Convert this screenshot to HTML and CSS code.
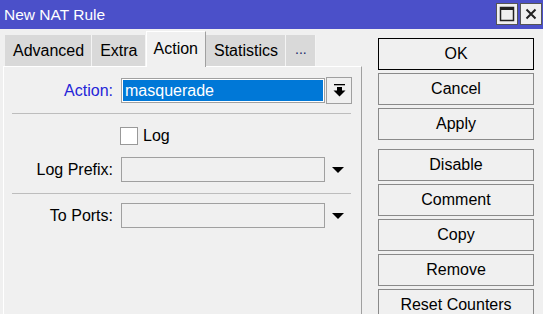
FILE: index.html
```html
<!DOCTYPE html>
<html>
	<head>
		<title>New NAT Rule</title>
		<link rel="stylesheet" href="styles.css">
	</head>
	<body>
		<div class="window">
			<div class="titlebar">
				<span class="title">New NAT Rule</span>
				<div class="win-btns">
					<button class="win-btn">
						<svg width="16" height="16" viewBox="0 0 16 16"><rect x="1.5" y="1.5" width="13" height="13" fill="none" stroke="#222" stroke-width="1.5"/><rect x="1" y="1" width="14" height="3" fill="#222"/></svg>
					</button>
					<button class="win-btn">
						<svg width="16" height="16" viewBox="0 0 16 16"><path d="M3.5 3.5 L12.5 12.5 M12.5 3.5 L3.5 12.5" stroke="#222" stroke-width="2"/></svg>
					</button>
				</div>
			</div>

			<div class="main">
				<div class="left">
					<div class="tabs">
						<div class="tab">Advanced</div>
						<div class="tab">Extra</div>
						<div class="tab active">Action</div>
						<div class="tab">Statistics</div>
						<div class="tab more">...</div>
					</div>
					<div class="panel">
						<div class="row">
							<label class="lbl blue">Action:</label>
							<div class="field selected">masquerade</div>
							<button class="drop-btn">
								<svg width="13" height="13" viewBox="0 0 13 13"><rect x="1" y="0" width="11" height="1.3" fill="#000"/><rect x="4" y="3" width="5" height="4" fill="#000"/><path d="M0.5 6.5 L12.5 6.5 L6.5 12.5 Z" fill="#000"/></svg>
							</button>
						</div>
						<div class="sep first"></div>
						<div class="check-row">
							<span class="checkbox"></span>
							<span>Log</span>
						</div>
						<div class="row prefix">
							<label class="lbl">Log Prefix:</label>
							<div class="field"></div>
							<span class="arrow"></span>
						</div>
						<div class="sep"></div>
						<div class="row ports">
							<label class="lbl">To Ports:</label>
							<div class="field"></div>
							<span class="arrow"></span>
						</div>
					</div>
				</div>

				<div class="actions">
					<button class="btn default">OK</button>
					<button class="btn">Cancel</button>
					<button class="btn">Apply</button>
					<button class="btn group">Disable</button>
					<button class="btn">Comment</button>
					<button class="btn">Copy</button>
					<button class="btn">Remove</button>
					<button class="btn">Reset Counters</button>
				</div>
			</div>
		</div>
	</body>
</html>
```

FILE: styles.css
```css
*{
	box-sizing: border-box;
}
html, body{
	margin: 0;
	height: 314px;
	overflow: hidden;
}
body{
	background: #f0f0f0;
	font-family: "Liberation Sans", Arial, sans-serif;
	font-size: 16px;
	color: #000;
}
.window{
	width: 543px;
}
.titlebar{
	height: 29px;
	background: #4b50c9;
	display: flex;
	align-items: center;
	justify-content: space-between;
	padding: 1px 1px 0 4px;
}
.title{
	color: #fff;
	font-size: 15.5px;
}
.win-btns{
	display: flex;
	gap: 2px;
	margin-top: -2px;
}
.win-btn{
	width: 22px;
	height: 22px;
	padding: 0;
	background: #f0f0f0;
	border: 1px solid #555;
	display: flex;
	align-items: center;
	justify-content: center;
}

.main{
	display: flex;
	padding-left: 3px;
}
.left{
	width: 359px;
	padding-top: 2px;
}
.tabs{
	display: flex;
	align-items: flex-end;
	height: 35px;
	margin-left: 2px;
	position: relative;
	z-index: 2;
}
.tab{
	height: 31px;
	line-height: 31px;
	padding: 0 7px 0 8px;
	background: #d9d9d9;
	border-right: 1px solid #f4f4f4;
}
.tab.active{
	height: 36px;
	line-height: 34px;
	margin-bottom: -1px;
	padding: 0 7px;
	background: #f0f0f0;
	border-top: 1px solid #fff;
	border-left: 1px solid #fff;
	border-right: 1px solid #a0a0a0;
}
.tab.more{
	padding: 0 8px 0 9px;
	line-height: 29px;
	font-size: 14px;
	color: #1a2a6a;
}
.panel{
	height: 260px;
	border-top: 1px solid #fff;
	border-left: 1px solid #fff;
	border-right: 1px solid #a0a0a0;
	padding-top: 10px;
}

.row{
	display: flex;
	align-items: center;
	height: 27px;
}
.lbl{
	width: 109px;
	text-align: right;
	margin-right: 8px;
}
.blue{
	color: #2525d8;
}
.field{
	width: 204px;
	height: 25px;
	border: 1px solid #a0a0a0;
	background: #f0f0f0;
}
.field.selected{
	background: #0078d7;
	color: #fff;
	box-shadow: inset 0 0 0 1px #fff;
	padding: 2px 3px;
	line-height: 19px;
}
.drop-btn{
	width: 26px;
	height: 27px;
	margin-left: 1px;
	padding: 0;
	border: 1px solid #a0a0a0;
	background: #f0f0f0;
	display: flex;
	align-items: center;
	justify-content: center;
}
.arrow{
	width: 0;
	height: 0;
	margin-left: 7px;
	border-left: 6.5px solid transparent;
	border-right: 6.5px solid transparent;
	border-top: 6px solid #000;
}
.sep{
	height: 1px;
	background: #bdbdbd;
	margin: 10px 10px 0 8px;
}
.sep.first{
	margin-top: 9px;
}
.check-row{
	display: flex;
	align-items: center;
	gap: 5px;
	height: 18px;
	margin-top: 13px;
	padding-left: 116px;
}
.checkbox{
	width: 18px;
	height: 18px;
	background: #fff;
	border: 1px solid #999;
}
.row.prefix{
	margin-top: 11px;
}
.row.ports{
	margin-top: 8px;
}

.actions{
	margin-left: 16px;
	padding-top: 9px;
	display: flex;
	flex-direction: column;
	gap: 3px;
}
.btn{
	width: 156px;
	height: 32px;
	padding: 0;
	font-family: "Liberation Sans", Arial, sans-serif;
	font-size: 16px;
	color: #000;
	background: #f0f0f0;
	border: 1px solid #8a8a8a;
}
.btn.default{
	border-color: #000;
}
.btn.group{
	margin-top: 6px;
}
```
